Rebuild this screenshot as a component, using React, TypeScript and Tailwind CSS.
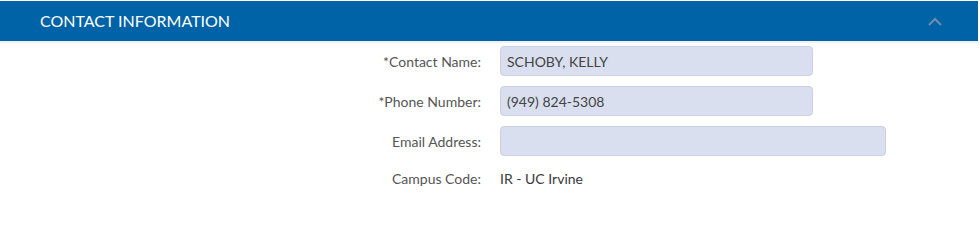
import React from 'react'

type FieldProps = {
  label: string
  value?: string
  width?: string
  plain?: boolean
}

const Field = ({ label, value = '', width = 'w-[313px]', plain = false }: FieldProps) => (
  <>
    <div
      className={`flex items-center justify-end text-[14px] text-[#555555] ${plain ? 'h-[24px]' : 'h-[30px]'}`}
    >
      {label}
    </div>
    {plain ? (
      <div className="flex h-[24px] items-center text-[14px] text-[#3a3a3a]">{value}</div>
    ) : (
      <div
        className={`flex h-[30px] items-center rounded-[4px] border border-[#c9d0e0] bg-[#d9dfee] px-[6px] text-[14px] text-[#444444] ${width}`}
      >
        {value}
      </div>
    )}
  </>
)

export default function App() {
  return (
    <div className="h-[205px] w-[980px] bg-white pt-px" style={{ fontFamily: 'Lato, "Open Sans", sans-serif' }}>
      <div className="mr-[2px] box-content flex h-[40px] items-center justify-between border-b-2 border-[#eef2f4] bg-[#0063a7] pl-[40px] pr-[36px]">
        <span className="text-[16px] text-white">CONTACT INFORMATION</span>
        <svg width="14" height="9" viewBox="0 0 14 9" fill="none">
          <path d="M1 8L7 2L13 8" stroke="#6b8fae" strokeWidth="2" />
        </svg>
      </div>
      <div className="mt-[3px] grid grid-cols-[481px_1fr] gap-x-[19px] gap-y-[10px]">
        <Field label="*Contact Name:" value="SCHOBY, KELLY" />
        <Field label="*Phone Number:" value="(949) 824-5308" />
        <Field label="Email Address:" width="w-[386px]" />
        <Field label="Campus Code:" value="IR - UC Irvine" plain />
      </div>
    </div>
  )
}
